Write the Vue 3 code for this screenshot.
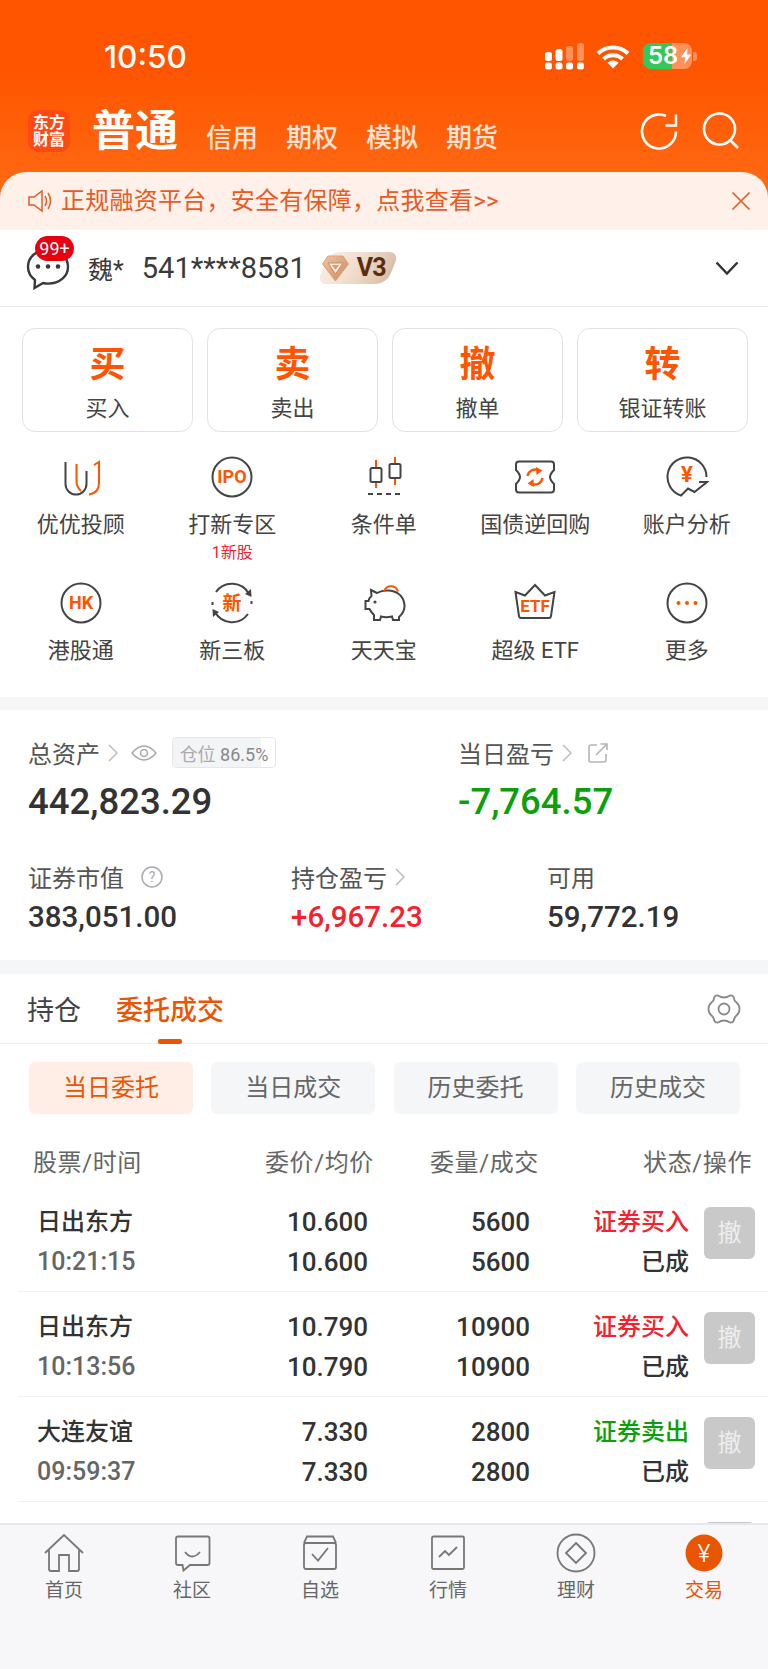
<script setup>
const cards = [
  { big: '买', small: '买入' },
  { big: '卖', small: '卖出' },
  { big: '撤', small: '撤单' },
  { big: '转', small: '银证转账' },
]
const subTabs = ['当日委托', '当日成交', '历史委托', '历史成交']
const orders = [
  { name: '日出东方', time: '10:21:15', price: '10.600', qty: '5600', side: '证券买入', cls: 'red' },
  { name: '日出东方', time: '10:13:56', price: '10.790', qty: '10900', side: '证券买入', cls: 'red' },
  { name: '大连友谊', time: '09:59:37', price: '7.330', qty: '2800', side: '证券卖出', cls: 'green' },
  { name: '', time: '', price: '', qty: '', side: '', cls: '' },
]
</script>

<template>
  <div class="page">
    <div class="main">
      <header class="hero">
        <div class="status">
          <span class="clock">10:50</span>
          <div class="status-right">
            <svg width="40" height="28" viewBox="0 0 40 28" fill="#fff">
              <rect x="0" y="9" width="7" height="9" rx="2.5" />
              <rect x="10.5" y="6" width="7" height="12" rx="2.5" />
              <rect x="21" y="3" width="7" height="15" rx="2.5" opacity=".35" />
              <rect x="32" y="0" width="7" height="18" rx="2.5" opacity=".35" />
              <rect x="0" y="19.5" width="7" height="7" rx="2.5" />
              <rect x="10.5" y="19.5" width="7" height="7" rx="2.5" />
              <rect x="21" y="19.5" width="7" height="7" rx="2.5" />
              <rect x="32" y="19.5" width="7" height="7" rx="2.5" />
            </svg>
            <svg class="wifi" width="34" height="24" viewBox="0 0 34 24" fill="none" stroke="#fff" stroke-width="4">
              <path d="M2 8.5 A22 22 0 0 1 32 8.5" />
              <path d="M7.5 14 A14 14 0 0 1 26.500 14" />
              <path d="M17 23.500 L11.500 17.800 A8 8 0 0 1 22.500 17.800 Z" fill="#fff" stroke="none" />
            </svg>
            <div class="battery">
              <span class="battery-num">58</span>
              <svg width="13" height="20" viewBox="0 0 13 20" fill="#fff"><path d="M8 0 L0 11.500 H5.500 L4 20 L13 8 H7.500 Z" /></svg>
            </div>
            <span class="battery-nub"></span>
          </div>
        </div>
        <div class="brand">
          <div class="logo"><span>东方</span><span>财富</span></div>
          <span class="brand-main">普通</span>
          <nav class="brand-tabs">
            <span>信用</span><span>期权</span><span>模拟</span><span>期货</span>
          </nav>
          <div class="brand-icons">
            <svg width="38" height="38" viewBox="0 0 38 38" fill="none" stroke="#fff" stroke-width="2.600">
              <path d="M36 19.500 A17 17 0 1 1 26 4" />
              <path d="M25.500 13.500 H36 V2.500" stroke-width="2.400" />
            </svg>
            <svg width="38" height="38" viewBox="0 0 38 38" fill="none" stroke="#fff" stroke-width="2.600">
              <circle cx="17.500" cy="17" r="15.500" />
              <path d="M28.500 28.500 L36 36" />
            </svg>
          </div>
        </div>
        <div class="notice">
          <svg width="24" height="24" viewBox="0 0 24 24" fill="none" stroke="#ea5a22" stroke-width="1.500">
            <path d="M1 8 H6 L14 2 V22 L6 16 H1 Z" />
            <path d="M17 7 Q20 12 17 17" />
            <path d="M20 4 Q25 12 20 20" />
          </svg>
          <span class="notice-text">正规融资平台，安全有保障，点我查看&gt;&gt;</span>
          <svg class="notice-close" width="20" height="20" viewBox="0 0 20 20" fill="none" stroke="#ea5a22" stroke-width="1.700">
            <path d="M1.500 1.500 L18.500 18.500 M18.500 1.500 L1.500 18.500" />
          </svg>
        </div>
      </header>

      <section class="account">
        <div class="msg">
          <svg width="44" height="42" viewBox="0 0 44 42" fill="none" stroke="#3a3a3a" stroke-width="2.400">
            <path d="M22 2 C10 2 2 9 2 19 C2 25 5 29 9 32 L8.500 40 L17 35 C19 35.500 20.500 35.600 22 35.600 C34 35.600 42 28 42 19 C42 9 34 2 22 2 Z" />
            <circle cx="12" cy="18.500" r="2.300" fill="#3a3a3a" stroke="none" />
            <circle cx="22" cy="18.500" r="2.300" fill="#3a3a3a" stroke="none" />
            <circle cx="32" cy="18.500" r="2.300" fill="#3a3a3a" stroke="none" />
          </svg>
          <span class="msg-badge">99+</span>
        </div>
        <span class="acc-name">魏*</span>
        <span class="acc-no">541****8581</span>
        <div class="vip">
          <svg width="27" height="27" viewBox="0 0 27 27">
            <defs>
              <linearGradient id="gem" x1="0" y1="0" x2="1" y2="1">
                <stop offset="0" stop-color="#f0c4a2" />
                <stop offset="1" stop-color="#c98a60" />
              </linearGradient>
            </defs>
            <path d="M6 1 H21 L26.500 9 L13.500 26 L.5 9 Z" fill="url(#gem)" stroke="#d9a27c" stroke-width="1" />
            <path d="M6 8 H21 L13.500 19 Z" fill="#fbeadb" stroke="#c98a60" stroke-width="1" />
            <path d="M10 10 H17 L13.500 15 Z" fill="#d79c75" />
          </svg>
          <span>V3</span>
        </div>
        <svg class="acc-chev" width="24" height="15" viewBox="0 0 24 15" fill="none" stroke="#333" stroke-width="2.400">
          <path d="M1.500 1.500 L12 12.500 L22.500 1.500" />
        </svg>
      </section>

      <section class="quick">
        <div class="cards">
          <div v-for="c in cards" :key="c.big" class="card">
            <span class="card-big">{{ c.big }}</span>
            <span class="card-small">{{ c.small }}</span>
          </div>
        </div>
        <div class="menu">
          <div class="menu-item">
            <svg class="ico" viewBox="0 0 44 44" fill="none" stroke="#444" stroke-width="2">
              <path d="M6.500 7 V29 A10.500 10.500 0 0 0 27.500 29 V16" />
              <path d="M17.500 9 V26 Q17.500 32 22 36" stroke="#ff5500" />
              <path d="M30 39.500 Q40 38 40 28 V7 L35 10" stroke="#ff5500" />
            </svg>
            <span class="menu-label">优优投顾</span>
          </div>
          <div class="menu-item">
            <svg class="ico" viewBox="0 0 44 44" fill="none" stroke="#444" stroke-width="2">
              <circle cx="22" cy="22" r="19.500" />
              <text x="22" y="28" class="ico-text" font-size="18" text-anchor="middle">IPO</text>
            </svg>
            <span class="menu-label">打新专区</span>
            <span class="menu-sub">1新股</span>
          </div>
          <div class="menu-item">
            <svg class="ico" viewBox="0 0 44 44" fill="none" stroke="#444" stroke-width="2">
              <path d="M14 5 V33 M33 2 V30" stroke="#ff5500" />
              <rect x="8.500" y="13" width="11" height="14" rx="1.500" fill="#fff" />
              <rect x="27.500" y="9" width="11" height="14" rx="1.500" fill="#fff" />
              <path d="M6 39 H41" stroke-dasharray="5 4" />
            </svg>
            <span class="menu-label">条件单</span>
          </div>
          <div class="menu-item">
            <svg class="ico" viewBox="0 0 44 44" fill="none" stroke="#444" stroke-width="2">
              <path d="M6 6.500 H38 Q41 6.500 41 9.500 V15 Q37 19 37 22 Q37 25 41 29 V34.500 Q41 37.500 38 37.500 H6 Q3 37.500 3 34.500 V29 Q7 25 7 22 Q7 19 3 15 V9.500 Q3 6.500 6 6.500 Z" />
              <path d="M14.500 21 A7.800 7.800 0 0 1 26 15.500" stroke="#ff5500" stroke-width="2.400" />
              <path d="M29.500 23 A7.800 7.800 0 0 1 18 28.500" stroke="#ff5500" stroke-width="2.400" />
              <path d="M23 12 L29.500 15.500 L23.500 20 Z M21 32 L14.500 28.500 L20.500 24 Z" fill="#ff5500" stroke="none" />
            </svg>
            <span class="menu-label">国债逆回购</span>
          </div>
          <div class="menu-item">
            <svg class="ico" viewBox="0 0 44 44" fill="none" stroke="#444" stroke-width="2">
              <path d="M41.500 22 A19.500 19.500 0 1 0 16 40.500 L23 33.500 L29.500 37 L42 27 H34" />
              <text x="22" y="27" class="ico-text" font-size="22" text-anchor="middle">¥</text>
            </svg>
            <span class="menu-label">账户分析</span>
          </div>

          <div class="menu-item">
            <svg class="ico" viewBox="0 0 44 44" fill="none" stroke="#444" stroke-width="2">
              <circle cx="22" cy="22" r="19.500" />
              <text x="22" y="28" class="ico-text" font-size="18" text-anchor="middle">HK</text>
            </svg>
            <span class="menu-label">港股通</span>
          </div>
          <div class="menu-item">
            <svg class="ico" viewBox="0 0 44 44" fill="none" stroke="#444" stroke-width="2">
              <path d="M6 11 A19.500 19.500 0 0 1 39 13" />
              <path d="M38 33 A19.500 19.500 0 0 1 5 31" />
              <path d="M2.500 21 V24 M41.500 20 V23" />
              <path d="M41 8 L41.500 16 L35 13 Z M3 36 L2.500 28 L9 31 Z" fill="#444" stroke="none" />
              <text x="22" y="28.500" class="ico-text" font-size="19" text-anchor="middle">新</text>
            </svg>
            <span class="menu-label">新三板</span>
          </div>
          <div class="menu-item">
            <svg class="ico" viewBox="0 0 44 44" fill="none" stroke="#444" stroke-width="2">
              <path d="M9 9 L15 12 Q20 9 27 9.500 Q41 11 42.500 24 Q43 31 37 36 V39 H31 L30 35.500 Q24 37 19 35.500 L18 39 H12 V34 Q9 31 7.500 28 H3.500 V20 H6.500 Q7 17 9.500 15 Z" />
              <circle cx="13" cy="21" r="1.600" fill="#444" stroke="none" />
              <path d="M22 10.500 A7.500 8 0 0 1 36 10.500" stroke="#ff5500" />
            </svg>
            <span class="menu-label">天天宝</span>
          </div>
          <div class="menu-item">
            <svg class="ico" viewBox="0 0 44 44" fill="none" stroke="#444" stroke-width="2">
              <path d="M2.500 11 L12 14.500 L22 4 L32 14.500 L41.500 11 L38 35 Q37.800 37 36 37 H8 Q6.200 37 6 35 Z" />
              <text x="22" y="31" class="ico-text" font-size="17" text-anchor="middle">ETF</text>
            </svg>
            <span class="menu-label">超级 ETF</span>
          </div>
          <div class="menu-item">
            <svg class="ico" viewBox="0 0 44 44" fill="none" stroke="#444" stroke-width="2">
              <circle cx="22" cy="22" r="19.500" />
              <circle cx="13.500" cy="22" r="2" fill="#ff5500" stroke="none" />
              <circle cx="22" cy="22" r="2" fill="#ff5500" stroke="none" />
              <circle cx="30.500" cy="22" r="2" fill="#ff5500" stroke="none" />
            </svg>
            <span class="menu-label">更多</span>
          </div>
        </div>
      </section>

      <section class="assets">
        <div class="asset-top">
          <div class="asset-col">
            <div class="asset-label">
              <span>总资产</span>
              <svg class="chev" width="10" height="18" viewBox="0 0 10 18" fill="none" stroke="#bbb" stroke-width="1.500"><path d="M1 1 L9 9 L1 17" /></svg>
              <svg class="eye" width="26" height="18" viewBox="0 0 26 18" fill="none" stroke="#aaa" stroke-width="1.600">
                <path d="M1 9 Q13 -5 25 9 Q13 23 1 9 Z" />
                <circle cx="13" cy="9" r="3.500" />
              </svg>
              <div class="pill"><span class="pill-fill"></span><span class="pill-text"><b>仓位</b> 86.5%</span></div>
            </div>
            <div class="asset-big">442,823.29</div>
          </div>
          <div class="asset-col">
            <div class="asset-label">
              <span>当日盈亏</span>
              <svg class="chev" width="10" height="18" viewBox="0 0 10 18" fill="none" stroke="#bbb" stroke-width="1.500"><path d="M1 1 L9 9 L1 17" /></svg>
              <svg class="share" width="20" height="20" viewBox="0 0 20 20" fill="none" stroke="#b5b5b5" stroke-width="1.600">
                <path d="M9 2 H3 Q1 2 1 4 V17 Q1 19 3 19 H16 Q18 19 18 17 V11" />
                <path d="M8 12 L18.500 1.500 M12.500 1 H19 V7" />
              </svg>
            </div>
            <div class="asset-big green">-7,764.57</div>
          </div>
        </div>
        <div class="asset-bottom">
          <div>
            <div class="asset-label">
              <span>证券市值</span>
              <svg class="help" width="22" height="22" viewBox="0 0 22 22" fill="none" stroke="#aaa" stroke-width="1.500">
                <circle cx="11" cy="11" r="10" />
                <text x="11" y="16" font-size="14" text-anchor="middle" fill="#aaa" stroke="none" class="help-q">?</text>
              </svg>
            </div>
            <div class="asset-mid">383,051.00</div>
          </div>
          <div>
            <div class="asset-label">
              <span>持仓盈亏</span>
              <svg class="chev" width="10" height="18" viewBox="0 0 10 18" fill="none" stroke="#bbb" stroke-width="1.500"><path d="M1 1 L9 9 L1 17" /></svg>
            </div>
            <div class="asset-mid red">+6,967.23</div>
          </div>
          <div>
            <div class="asset-label"><span>可用</span></div>
            <div class="asset-mid">59,772.19</div>
          </div>
        </div>
      </section>

      <section class="orders">
        <div class="tabs">
          <span class="tab">持仓</span>
          <span class="tab tab-on">委托成交</span>
          <svg class="gear" width="34" height="32" viewBox="0 0 34 32" fill="none" stroke="#8a8a8a" stroke-width="1.800">
            <path d="M11 2.500 Q17 6.500 23 2.500 Q25.500 2 26.500 4 Q27 7.500 29.500 9.500 Q32.500 12 32.500 16 Q32.500 20 29.500 22.500 Q27 24.500 26.500 28 Q25.500 30 23 29.500 Q17 25.500 11 29.500 Q8.500 30 7.500 28 Q7 24.500 4.500 22.500 Q1.500 20 1.500 16 Q1.500 12 4.500 9.500 Q7 7.500 7.500 4 Q8.500 2 11 2.500 Z" />
            <circle cx="17" cy="16" r="5.500" />
          </svg>
        </div>
        <div class="subtabs">
          <span v-for="(s, i) in subTabs" :key="s" class="subtab" :class="{ 'subtab-on': i === 0 }">{{ s }}</span>
        </div>
        <div class="thead">
          <span>股票/时间</span>
          <span>委价/均价</span>
          <span>委量/成交</span>
          <span>状态/操作</span>
        </div>
        <div v-for="(o, i) in orders" :key="i" class="row">
          <div class="cell-name"><span>{{ o.name }}</span><span class="time">{{ o.time }}</span></div>
          <div class="cell-r"><span>{{ o.price }}</span><span>{{ o.price }}</span></div>
          <div class="cell-r"><span>{{ o.qty }}</span><span>{{ o.qty }}</span></div>
          <div class="cell-r"><span :class="o.cls">{{ o.side }}</span><span>{{ o.side ? '已成' : '' }}</span></div>
          <div class="cancel">{{ o.name ? '撤' : '' }}</div>
        </div>
      </section>
    </div>

    <footer class="nav">
      <div class="nav-item">
        <svg class="nav-ico" viewBox="0 0 44 40" fill="none" stroke="#777" stroke-width="1.800">
          <path d="M3 20 L22 2 L41 20" />
          <path d="M7 17 V36 Q7 38 9 38 H17 V22 H27 V38 H35 Q37 38 37 36 V17" />
        </svg>
        <span>首页</span>
      </div>
      <div class="nav-item">
        <svg class="nav-ico" viewBox="0 0 44 40" fill="none" stroke="#777" stroke-width="1.800">
          <path d="M8 3.500 H37.500 Q39.500 3.500 39.500 5.500 V30 Q39.500 32 37.500 32 H20 L13.500 37.500 L12.500 32 H8 Q6 32 6 30 V5.500 Q6 3.500 8 3.500 Z" />
          <path d="M15 19 Q22 28 30 19" />
        </svg>
        <span>社区</span>
      </div>
      <div class="nav-item">
        <svg class="nav-ico" viewBox="0 0 44 40" fill="none" stroke="#777" stroke-width="1.800">
          <rect x="6" y="10" width="32" height="26" rx="2" />
          <path d="M6 10 L9 3.500 H35 L38 10" />
          <path d="M14 21 L20 27.500 L30 15" />
        </svg>
        <span>自选</span>
      </div>
      <div class="nav-item">
        <svg class="nav-ico" viewBox="0 0 44 40" fill="none" stroke="#777" stroke-width="1.800">
          <rect x="6" y="3.500" width="32" height="32.500" rx="1.500" />
          <path d="M13 24 L19 18 L23 22 L31 14" />
        </svg>
        <span>行情</span>
      </div>
      <div class="nav-item">
        <svg class="nav-ico" viewBox="0 0 44 40" fill="none" stroke="#777" stroke-width="1.800">
          <circle cx="22" cy="20" r="18.500" />
          <path d="M22 10 L32 20 L22 30 L12 20 Z" />
        </svg>
        <span>理财</span>
      </div>
      <div class="nav-item nav-on">
        <svg class="nav-ico" viewBox="0 0 44 40">
          <circle cx="22" cy="20" r="18.500" fill="#ea5504" />
          <text x="22" y="28.500" font-size="24" text-anchor="middle" fill="#fff" class="nav-yen">¥</text>
        </svg>
        <span>交易</span>
      </div>
    </footer>
  </div>
</template>

<style scoped>
.page {
  width: 768px;
  height: 1669px;
  display: flex;
  flex-direction: column;
  overflow: hidden;
  background: #fff;
  color: #333;
  font-family: Roboto, "Noto Sans CJK SC", sans-serif;
}
.main {
  flex: 1;
  min-height: 0;
  overflow: hidden;
  background: #f5f6f8;
}

/* header */
.hero {
  height: 230px;
  display: flex;
  flex-direction: column;
  background: linear-gradient(180deg, #ff5500 0, #ff5500 70px, #ff7019 230px);
}
.status {
  height: 110px;
  flex: none;
  display: flex;
  justify-content: space-between;
  align-items: flex-start;
  padding: 38px 71px 0 104px;
  box-sizing: border-box;
}
.clock {
  color: #fff;
  font-family: Inter, sans-serif;
  font-size: 31.5px;
  line-height: 38px;
  font-weight: 500;
}
.status-right {
  display: flex;
  align-items: flex-start;
  margin-top: 5px;
  position: relative;
}
.wifi {
  margin: 2px 13px 0 11px;
}
.battery {
  width: 49px;
  height: 26px;
  border-radius: 8px;
  display: flex;
  align-items: center;
  padding-left: 5px;
  box-sizing: border-box;
  gap: 3px;
  background: linear-gradient(90deg, #34c759 0, #34c759 29px, rgba(255, 255, 255, .35) 29px);
}
.battery-num {
  color: #fff;
  font-family: Inter, sans-serif;
  font-size: 24px;
  line-height: 26px;
  font-weight: 600;
}
.battery-nub {
  width: 4px;
  height: 9px;
  margin: 9px 0 0 1px;
  border-radius: 0 3px 3px 0;
  background: rgba(255, 255, 255, .35);
}
.brand {
  height: 62px;
  flex: none;
  display: flex;
  align-items: flex-start;
  padding: 0 28px 0 28px;
  box-sizing: border-box;
  color: #fff;
}
.logo {
  width: 42px;
  height: 42px;
  border-radius: 10px;
  background: #fc4a12;
  display: flex;
  flex-direction: column;
  align-items: center;
  justify-content: center;
  font-size: 16px;
  line-height: 17px;
  font-weight: 700;
}
.brand-main {
  margin-left: 22px;
  font-size: 43px;
  line-height: 42px;
  font-weight: 700;
}
.brand-tabs {
  display: flex;
  gap: 28px;
  margin: 13px 0 0 28px;
  font-size: 26px;
  line-height: 30px;
  font-weight: 500;
  color: #ffe3d3;
}
.brand-icons {
  margin-left: auto;
  display: flex;
  gap: 24px;
  margin-top: 2px;
}
.notice {
  height: 58px;
  flex: none;
  display: flex;
  align-items: center;
  padding: 0 17px 0 28px;
  border-radius: 26px 26px 0 0;
  background: #fff1ea;
  box-sizing: border-box;
}
.notice-text {
  margin-left: 9px;
  font-size: 24px;
  line-height: 30px;
  letter-spacing: .25px;
  color: #ea5a22;
}
.notice-close {
  margin-left: auto;
}

/* account */
.account {
  height: 77px;
  display: flex;
  align-items: center;
  padding: 0 29px 0 26px;
  box-sizing: border-box;
  background: #fff;
  border-bottom: 1px solid #e8e8e8;
}
.msg {
  position: relative;
  width: 44px;
  height: 42px;
  margin-top: 2px;
}
.msg-badge {
  position: absolute;
  left: 9px;
  top: -12px;
  width: 39px;
  height: 25px;
  border-radius: 13px;
  background: #e60012;
  color: #fff;
  font-size: 18px;
  line-height: 25px;
  text-align: center;
}
.acc-name {
  margin-left: 18px;
  font-size: 25px;
  color: #3a3a3a;
}
.acc-no {
  margin-left: 18px;
  font-size: 29px;
  color: #3a3a3a;
}
.vip {
  position: relative;
  margin: 0 0 0 13px;
  width: 78px;
  height: 32px;
  display: flex;
  align-items: center;
  padding-left: 3px;
  box-sizing: border-box;
}
.vip::before {
  content: "";
  position: absolute;
  inset: 0 4px;
  border-radius: 10px;
  background: linear-gradient(100deg, #f8eee5 0, #eedccb 50%, #d9bda5 100%);
  transform: skewX(-22deg);
}
.vip svg {
  position: relative;
}
.vip span {
  position: relative;
  margin-left: 8px;
  font-size: 25px;
  line-height: 32px;
  font-weight: 700;
  letter-spacing: -1px;
  color: #5a2d10;
}
.acc-chev {
  margin-left: auto;
}

/* quick */
.quick {
  height: 390px;
  background: #fff;
}
.cards {
  display: grid;
  grid-template-columns: repeat(4, 171px);
  gap: 14px;
  padding: 21px 0 0 22px;
}
.card {
  height: 104px;
  box-sizing: border-box;
  border: 1px solid #e2e2e2;
  border-radius: 13px;
  display: flex;
  flex-direction: column;
  align-items: center;
  padding-top: 14px;
}
.card-big {
  font-size: 36px;
  line-height: 44px;
  font-weight: 700;
  color: #ff5500;
}
.card-small {
  margin-top: 8px;
  font-size: 22px;
  line-height: 28px;
  color: #444;
}
.menu {
  display: grid;
  grid-template-columns: repeat(5, 151.5px);
  grid-auto-rows: 126px;
  padding: 23px 0 0 5px;
}
.menu-item {
  display: flex;
  flex-direction: column;
  align-items: center;
}
.ico {
  width: 44px;
  height: 44px;
}
.ico-text {
  fill: #ff5500;
  stroke: none;
  font-weight: 700;
}
.menu-label {
  margin-top: 11px;
  font-size: 22px;
  line-height: 30px;
  color: #444;
  white-space: nowrap;
}
.menu-sub {
  margin-top: 3px;
  font-size: 16px;
  line-height: 20px;
  color: #f5222d;
}

/* assets */
.assets {
  margin-top: 13px;
  height: 250px;
  background: #fff;
  box-sizing: border-box;
  padding: 27px 0 0 28px;
}
.asset-top {
  display: grid;
  grid-template-columns: 430px 1fr;
}
.asset-label {
  display: flex;
  align-items: center;
  height: 31px;
  font-size: 24px;
  color: #555;
}
.chev {
  margin-left: 8px;
}
.eye {
  margin-left: 13px;
}
.share {
  margin-left: 16px;
}
.help {
  margin-left: 17px;
}
.help-q {
  font-weight: 400;
}
.pill {
  position: relative;
  margin-left: 15px;
  width: 104px;
  height: 31px;
  box-sizing: border-box;
  border: 1px solid #e6e6e6;
  border-radius: 4px;
  display: flex;
  align-items: center;
  justify-content: center;
  overflow: hidden;
}
.pill-fill {
  position: absolute;
  left: 0;
  top: 0;
  bottom: 0;
  width: 86.5%;
  background: #f3f4f6;
}
.pill-text {
  position: relative;
  font-size: 18px;
  color: #888;
  white-space: nowrap;
}
.pill-text b {
  font-weight: 400;
  color: #aaa;
}
.asset-big {
  margin-top: 13px;
  font-size: 36.5px;
  line-height: 42px;
  font-weight: 500;
}
.asset-bottom {
  display: grid;
  grid-template-columns: 263px 256px 1fr;
  margin-top: 38px;
}
.asset-mid {
  margin-top: 8px;
  font-size: 29.5px;
  line-height: 34px;
  font-weight: 500;
}
.green {
  color: #0aa00a;
}
.red {
  color: #f5222d;
}

/* orders */
.orders {
  margin-top: 14px;
  background: #fff;
  height: 700px;
}
.tabs {
  position: relative;
  height: 70px;
  box-sizing: border-box;
  display: flex;
  align-items: center;
  gap: 35px;
  padding: 4px 27px 0;
  border-bottom: 1px solid #eee;
}
.tab {
  font-size: 27px;
  line-height: 36px;
  color: #444;
}
.tab-on {
  position: relative;
  color: #ea5504;
  font-weight: 500;
}
.tab-on::after {
  content: "";
  position: absolute;
  left: 42px;
  bottom: -15px;
  width: 24px;
  height: 5px;
  border-radius: 2px;
  background: #ea5504;
}
.gear {
  margin: -4px 0 0 auto;
}
.subtabs {
  display: grid;
  grid-template-columns: repeat(4, 164px);
  gap: 18.3px;
  padding: 18px 0 0 29px;
}
.subtab {
  height: 52px;
  border-radius: 6px;
  background: #f5f6f8;
  color: #666;
  font-size: 24px;
  line-height: 52px;
  text-align: center;
}
.subtab-on {
  background: #ffeee6;
  color: #ea5504;
}
.thead {
  display: grid;
  grid-template-columns: 150px 200px 162px 1fr;
  height: 73px;
  box-sizing: border-box;
  padding: 34px 16px 0 33px;
  color: #666;
  font-size: 24px;
  line-height: 30px;
  letter-spacing: .6px;
  white-space: nowrap;
}
.thead span:nth-child(2) {
  padding-left: 82px;
}
.thead span:nth-child(3) {
  padding-left: 47px;
}
.thead span:nth-child(4) {
  text-align: right;
}
.row {
  display: grid;
  grid-template-columns: 150px 200px 162px 159px 1fr;
  height: 105px;
  box-sizing: border-box;
  margin-left: 18px;
  padding-top: 15px;
  border-bottom: 1px solid #f0f0f0;
  font-size: 26px;
  line-height: 40px;
  font-weight: 500;
  color: #333;
}
.row > div {
  display: flex;
  flex-direction: column;
}
.cell-name {
  padding-left: 19px;
  white-space: nowrap;
}
.cell-name span:first-child,
.cell-r:nth-child(4) {
  font-size: 24px;
}
.cell-r {
  align-items: flex-end;
  white-space: nowrap;
}
.time {
  color: #666;
  font-size: 25px;
}
.row > .cancel {
  display: block;
  width: 51px;
  height: 52px;
  margin: 5px 0 0 15px;
  border-radius: 6px;
  background: #c9c9c9;
  color: #eee;
  text-align: center;
  font-size: 24px;
  line-height: 52px;
  font-weight: 400;
}

/* nav */
.nav {
  height: 146px;
  flex: none;
  box-sizing: border-box;
  border-top: 2px solid #e8e8ec;
  background: #f7f7fa;
  display: grid;
  grid-template-columns: repeat(6, 128px);
  padding-top: 8px;
}
.nav-item {
  display: flex;
  flex-direction: column;
  align-items: center;
  font-size: 19px;
  line-height: 24px;
  color: #666;
}
.nav-ico {
  width: 44px;
  height: 40px;
  margin-bottom: 6px;
}
.nav-on {
  color: #ea5504;
}
.nav-yen {
  font-family: Inter, sans-serif;
  font-weight: 300;
}
</style>
